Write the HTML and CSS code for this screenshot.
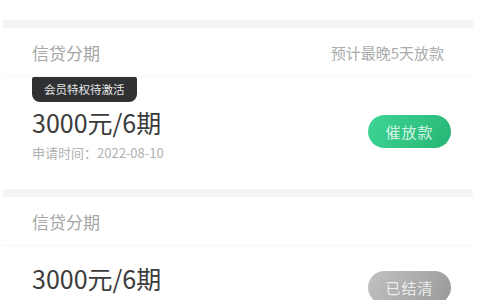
FILE: index.html
```html
<!DOCTYPE html>
<html lang="zh-CN">

<head>
    <meta charset="UTF-8">
    <meta name="viewport" content="width=device-width, initial-scale=1.0">
    <title>我的分期</title>
    <link rel="stylesheet" href="styles.css">
</head>

<body>
    <div class="list">
        <!-- 待放款 -->
        <div class="card">
            <div class="card-head">
                <span class="card-title">信贷分期</span>
                <span class="card-note">预计最晚5天放款</span>
            </div>
            <div class="card-body">
                <div class="badge">会员特权待激活</div>
                <div class="row">
                    <div class="info">
                        <div class="amount">3000元/6期</div>
                        <div class="date">申请时间：2022-08-10</div>
                    </div>
                    <button class="btn btn-green">催放款</button>
                </div>
            </div>
        </div>

        <!-- 已结清 -->
        <div class="card">
            <div class="card-head">
                <span class="card-title">信贷分期</span>
            </div>
            <div class="card-body">
                <div class="row">
                    <div class="info">
                        <div class="amount">3000元/6期</div>
                        <div class="date">申请时间：2022-07-02</div>
                    </div>
                    <button class="btn btn-gray">已结清</button>
                </div>
            </div>
        </div>
    </div>
</body>

</html>
```

FILE: styles.css
```css
body {
    margin: 0;
    padding-top: 20px;
    background-color: #fff;
    font-family: "Noto Sans CJK SC", "Noto Sans", sans-serif;
}

.list {
    margin: 0 7px 0 3px;
}

/* grey gap between cards */
.card {
    border-top: 8px solid #f4f4f4;
}

.card-head {
    height: 48px;
    padding: 0 29px;
    display: flex;
    align-items: center;
    justify-content: space-between;
    border-bottom: 1px solid #f6f6f6;
}

.card-title {
    font-size: 17px;
    color: #a6a6a6;
}

.card-note {
    font-size: 15px;
    color: #ababab;
}

.card-body {
    padding: 18px 22px 28px 29px;
}

.badge {
    width: fit-content;
    height: 25px;
    line-height: 25px;
    padding: 0 12px;
    margin: -18px 0 6px;
    background-color: #2f3133;
    color: #e8e8e8;
    font-size: 11.5px;
    border-radius: 2px 2px 8px 8px;
}

.row {
    display: flex;
    align-items: center;
    justify-content: space-between;
}

.amount {
    font-size: 25px;
    line-height: 28px;
    color: #3b3b3b;
}

.date {
    margin-top: 9px;
    font-size: 13px;
    line-height: 16px;
    color: #b0b0b0;
}

.btn {
    width: 83px;
    height: 33px;
    border: none;
    border-radius: 17px;
    font-family: inherit;
    font-size: 15px;
    letter-spacing: 1px;
    color: rgba(255, 255, 255, 0.8);
    margin-top: -6px;
}

.btn-green {
    background: linear-gradient(120deg, #3fd595, #25b674);
}

.btn-gray {
    background: linear-gradient(120deg, #c2c2c2, #999);
}
```
